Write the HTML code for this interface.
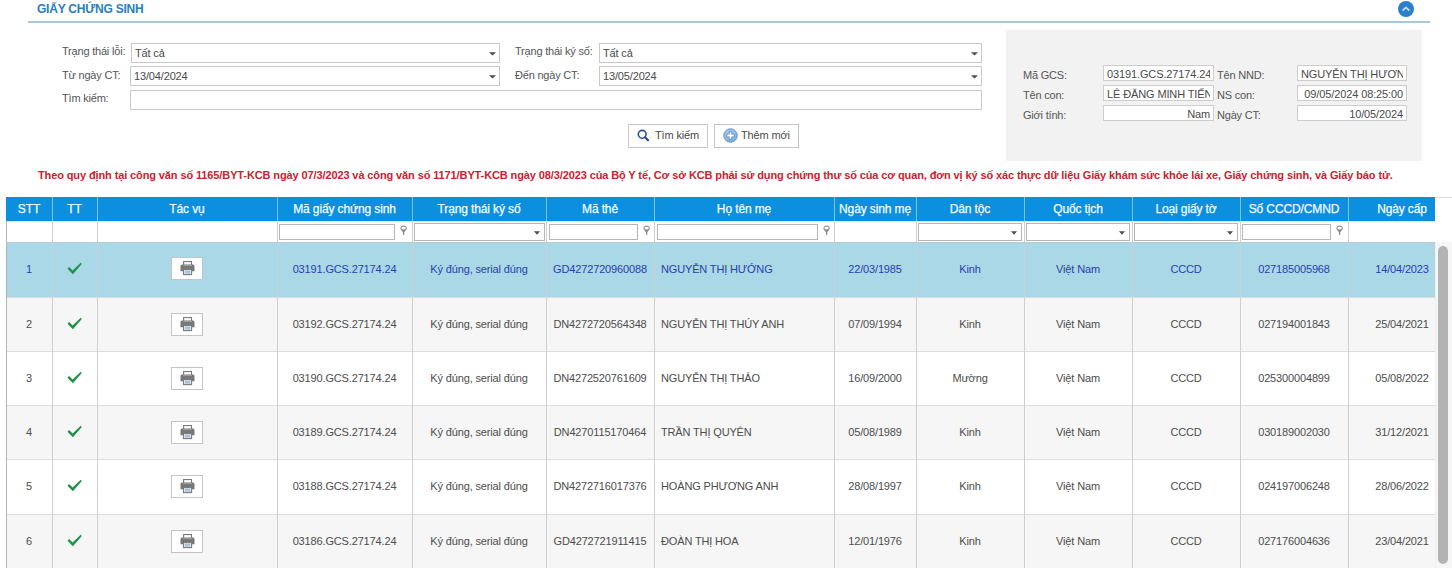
<!DOCTYPE html><html><head><meta charset="utf-8"><style>
*{margin:0;padding:0;box-sizing:border-box}
html,body{width:1452px;height:568px;overflow:hidden;background:#fff;font-family:"Liberation Sans", sans-serif;}
body{position:relative}
.title{position:absolute;left:37px;top:2px;font-size:12px;font-weight:bold;color:#2a80b9;line-height:14px;white-space:nowrap;letter-spacing:-0.22px}
.hline{position:absolute;left:28px;top:21px;width:1402px;height:2px;background:#a9c8d8}
.collapse{position:absolute;left:1398px;top:1px;width:16px;height:16px}
.collapse svg{display:block}
.lbl{position:absolute;font-size:11px;color:#555;line-height:13px;white-space:nowrap;letter-spacing:-0.2px}
.sel,.inp{position:absolute;border:1px solid #c9c9c9;background:#fff}
.itx{position:absolute;left:3px;top:3px;font-size:11px;color:#4a4a4a;line-height:13px;white-space:nowrap;letter-spacing:-0.15px}
.sel .arr{position:absolute;right:3px;top:8px}
.btn{position:absolute;border:1px solid #c4c4c4;background:#fff;font-size:11px;color:#4a4a4a;line-height:13px;white-space:nowrap;letter-spacing:-0.15px}
.panel{position:absolute;left:1006px;top:30px;width:416px;height:131px;background:#f2f2f2}
.pin{position:absolute;border:1px solid #cdcdcd;background:#fff;overflow:hidden}
.ptx{position:absolute;top:2px;font-size:11px;color:#4a4a4a;line-height:13px;white-space:nowrap;letter-spacing:-0.12px}
.pclip{position:absolute;left:3px;right:3px;top:0;bottom:0;overflow:hidden}
.ptx.l{left:0}
.ptx.r{right:0}
.notice{position:absolute;left:38px;top:169px;font-size:11px;font-weight:bold;color:#ca2230;line-height:13px;white-space:nowrap;letter-spacing:-0.113px}
.tbl{position:absolute;left:6px;top:197px;width:1429px;height:371px;overflow:hidden}
.thead{position:absolute;left:0;top:0;width:1450px;height:24px;background:#0c8fde}
.th{position:absolute;top:0;height:24px;line-height:24px;text-align:center;color:#f2fbff;font-size:12px;white-space:nowrap;letter-spacing:-0.12px;-webkit-text-stroke:0.25px #f2fbff}
.thsep{position:absolute;top:0;width:1px;height:24px;background:#7cc3ee}
.frow{position:absolute;left:0;top:24px;width:1450px;height:21px;background:#fff}
.fsep{position:absolute;top:24px;width:1px;height:21px;background:#cfcfcf}
.finp{position:absolute;top:27px;height:16px;border:1px solid #b5b5b5;background:#fff}
.fpin{position:absolute;top:28px;width:8px;height:11px}
.fpin svg{display:block}
.fdd{position:absolute;top:26px;height:18px;border:1px solid #b5b5b5;background:#fff}
.fdd .arr{position:absolute;right:4px;top:7px}
.tr{position:absolute;left:0;width:1450px;border-bottom:1px solid #dcdcdc;box-sizing:content-box;font-size:11px;color:#4d4d4d;letter-spacing:-0.15px}
.tr.sel1{color:#2b3db0}
.td{position:absolute;height:13px;line-height:13px;white-space:nowrap;overflow:hidden}
.td svg{vertical-align:middle}
.tsep{position:absolute;top:0;width:1px;background:#cfcfcf}
.tbl .lborder{position:absolute;left:0;top:24px;width:1px;height:400px;background:#c8c8c8}
.pbtn{position:absolute;width:32px;height:23px;border:1px solid #c4c4c4;background:#fff}
.ico{position:absolute;line-height:0}
.ico svg{display:block}
.sbtrack{position:absolute;left:1435px;top:242px;width:17px;height:326px;background:#f6f6f6;border-left:1px solid #efefef}
.sbtop{position:absolute;left:1435px;top:197px;width:17px;height:1px;background:#dedede}
.sbthumb{position:absolute;left:1438px;top:246px;width:10px;height:318px;background:#b3b3b3;border-radius:5px}
</style></head><body>
<div class="title">GIẤY CHỨNG SINH</div>
<div class="hline"></div>
<div class="collapse"><svg width="16" height="16" viewBox="0 0 16 16"><circle cx="8" cy="8" r="8" fill="#2b7fcb"/><path d="M4.6 9.6 L8 6.4 L11.4 9.6" stroke="#bfe3ff" stroke-width="1.8" fill="none"/></svg></div>
<div class="lbl" style="left:62px;top:45px">Trạng thái lỗi:</div>
<div class="sel" style="left:131px;top:43px;width:369px;height:20px"><span class="itx">Tất cả</span><svg class="arr" width="7" height="4" viewBox="0 0 7 4"><path d="M0 0.2H7L3.5 3.6Z" fill="#4d4d4d"/></svg></div>
<div class="lbl" style="left:62px;top:69px">Từ ngày CT:</div>
<div class="sel" style="left:130px;top:66px;width:370px;height:20px"><span class="itx">13/04/2024</span><svg class="arr" width="7" height="4" viewBox="0 0 7 4"><path d="M0 0.2H7L3.5 3.6Z" fill="#4d4d4d"/></svg></div>
<div class="lbl" style="left:62px;top:92px">Tìm kiếm:</div>
<div class="inp" style="left:130px;top:90px;width:852px;height:20px"></div>
<div class="lbl" style="left:515px;top:45px">Trạng thái ký số:</div>
<div class="sel" style="left:599px;top:43px;width:383px;height:20px"><span class="itx">Tất cả</span><svg class="arr" width="7" height="4" viewBox="0 0 7 4"><path d="M0 0.2H7L3.5 3.6Z" fill="#4d4d4d"/></svg></div>
<div class="lbl" style="left:515px;top:69px">Đến ngày CT:</div>
<div class="sel" style="left:599px;top:66px;width:383px;height:20px"><span class="itx">13/05/2024</span><svg class="arr" width="7" height="4" viewBox="0 0 7 4"><path d="M0 0.2H7L3.5 3.6Z" fill="#4d4d4d"/></svg></div>
<div class="btn" style="left:628px;top:124px;width:80px;height:24px"><svg width="14" height="14" viewBox="0 0 14 14" style="position:absolute;left:8px;top:4px"><circle cx="5.2" cy="5.3" r="3.9" stroke="#2d4f88" stroke-width="1.6" fill="none"/><path d="M8 8.2 L11 11.3" stroke="#2d4f88" stroke-width="2.2" stroke-linecap="round"/></svg><span style="position:absolute;left:26px;top:4px">Tìm kiếm</span></div>
<div class="btn" style="left:714px;top:124px;width:85px;height:24px"><svg width="15" height="15" viewBox="0 0 15 15" style="position:absolute;left:8px;top:3px"><defs><radialGradient id="pg" cx="45%" cy="40%" r="65%"><stop offset="0" stop-color="#bddcf4"/><stop offset="0.7" stop-color="#88b7e1"/><stop offset="1" stop-color="#6697cb"/></radialGradient></defs><circle cx="7.5" cy="7.5" r="6.8" fill="url(#pg)" stroke="#6a98c8" stroke-width="0.9"/><path d="M7.5 3.5V11.5M3.5 7.5H11.5" stroke="#5584ba" stroke-width="3.4"/><path d="M7.5 4.2V10.8M4.2 7.5H10.8" stroke="#fff" stroke-width="1.8"/></svg><span style="position:absolute;left:26px;top:4px">Thêm mới</span></div>
<div class="panel"></div>
<div class="lbl" style="left:1023px;top:69px">Mã GCS:</div>
<div class="pin" style="left:1103px;top:65px;width:111px;height:16px"><div class="pclip"><span class="ptx l">03191.GCS.27174.24</span></div></div>
<div class="lbl" style="left:1217px;top:69px">Tên NND:</div>
<div class="pin" style="left:1297px;top:65px;width:110px;height:16px"><div class="pclip"><span class="ptx l">NGUYỄN THỊ HƯƠNG</span></div></div>
<div class="lbl" style="left:1023px;top:89px">Tên con:</div>
<div class="pin" style="left:1103px;top:85px;width:111px;height:16px"><div class="pclip"><span class="ptx l">LÊ ĐĂNG MINH TIẾN</span></div></div>
<div class="lbl" style="left:1217px;top:89px">NS con:</div>
<div class="pin" style="left:1297px;top:85px;width:110px;height:16px"><div class="pclip"><span class="ptx r">09/05/2024 08:25:00</span></div></div>
<div class="lbl" style="left:1023px;top:109px">Giới tính:</div>
<div class="pin" style="left:1103px;top:105px;width:111px;height:16px"><div class="pclip"><span class="ptx r">Nam</span></div></div>
<div class="lbl" style="left:1217px;top:109px">Ngày CT:</div>
<div class="pin" style="left:1297px;top:105px;width:110px;height:16px"><div class="pclip"><span class="ptx r">10/05/2024</span></div></div>
<div class="notice">Theo quy định tại công văn số 1165/BYT-KCB ngày 07/3/2023 và công văn số 1171/BYT-KCB ngày 08/3/2023 của Bộ Y tế, Cơ sở KCB phải sử dụng chứng thư số của cơ quan, đơn vị ký số xác thực dữ liệu Giấy khám sức khỏe lái xe, Giấy chứng sinh, và Giấy báo tử.</div>
<div class="tbl">
<div class="thead"></div>
<div class="th" style="left:0px;width:46px">STT</div>
<div class="thsep" style="left:46px"></div>
<div class="th" style="left:46px;width:45px">TT</div>
<div class="thsep" style="left:91px"></div>
<div class="th" style="left:91px;width:180px">Tác vụ</div>
<div class="thsep" style="left:271px"></div>
<div class="th" style="left:271px;width:135px">Mã giấy chứng sinh</div>
<div class="thsep" style="left:406px"></div>
<div class="th" style="left:406px;width:134px">Trạng thái ký số</div>
<div class="thsep" style="left:540px"></div>
<div class="th" style="left:540px;width:108px">Mã thẻ</div>
<div class="thsep" style="left:648px"></div>
<div class="th" style="left:648px;width:180px">Họ tên mẹ</div>
<div class="thsep" style="left:828px"></div>
<div class="th" style="left:828px;width:82px">Ngày sinh mẹ</div>
<div class="thsep" style="left:910px"></div>
<div class="th" style="left:910px;width:108px">Dân tộc</div>
<div class="thsep" style="left:1018px"></div>
<div class="th" style="left:1018px;width:108px">Quốc tịch</div>
<div class="thsep" style="left:1126px"></div>
<div class="th" style="left:1126px;width:108px">Loại giấy tờ</div>
<div class="thsep" style="left:1234px"></div>
<div class="th" style="left:1234px;width:108px">Số CCCD/CMND</div>
<div class="thsep" style="left:1342px"></div>
<div class="th" style="left:1342px;width:108px">Ngày cấp</div>
<div class="frow"></div>

<div class="fsep" style="left:46px"></div>
<div class="fsep" style="left:91px"></div>
<div class="fsep" style="left:271px"></div>
<div class="fsep" style="left:406px"></div>
<div class="finp" style="left:273px;width:116px"></div>
<div class="fpin" style="left:393px"><svg width="8" height="11" viewBox="-0.6 0 8 11"><path d="M0.8 3.2 C0.8 1.4 2.3 0.6 4 0.6 C5.7 0.6 7.2 1.4 7.2 3.2 C7.2 5.2 5.2 6 4.7 7.4 L4.6 10.1 L3.4 10.1 L3.3 7.4 C2.8 6 0.8 5.2 0.8 3.2 Z" fill="#8f8f8f"/><ellipse cx="4" cy="3.1" rx="2.2" ry="1.35" fill="#fcfcfc"/></svg></div>
<div class="fsep" style="left:540px"></div>
<div class="fdd" style="left:408px;width:131px"><svg class="arr" width="6" height="4" viewBox="0 0 6 4"><path d="M0 0.3H6L3 3.8Z" fill="#4d4d4d"/></svg></div>
<div class="fsep" style="left:648px"></div>
<div class="finp" style="left:543px;width:89px"></div>
<div class="fpin" style="left:636px"><svg width="8" height="11" viewBox="-0.6 0 8 11"><path d="M0.8 3.2 C0.8 1.4 2.3 0.6 4 0.6 C5.7 0.6 7.2 1.4 7.2 3.2 C7.2 5.2 5.2 6 4.7 7.4 L4.6 10.1 L3.4 10.1 L3.3 7.4 C2.8 6 0.8 5.2 0.8 3.2 Z" fill="#8f8f8f"/><ellipse cx="4" cy="3.1" rx="2.2" ry="1.35" fill="#fcfcfc"/></svg></div>
<div class="fsep" style="left:828px"></div>
<div class="finp" style="left:651px;width:161px"></div>
<div class="fpin" style="left:816px"><svg width="8" height="11" viewBox="-0.6 0 8 11"><path d="M0.8 3.2 C0.8 1.4 2.3 0.6 4 0.6 C5.7 0.6 7.2 1.4 7.2 3.2 C7.2 5.2 5.2 6 4.7 7.4 L4.6 10.1 L3.4 10.1 L3.3 7.4 C2.8 6 0.8 5.2 0.8 3.2 Z" fill="#8f8f8f"/><ellipse cx="4" cy="3.1" rx="2.2" ry="1.35" fill="#fcfcfc"/></svg></div>
<div class="fsep" style="left:910px"></div>
<div class="fsep" style="left:1018px"></div>
<div class="fdd" style="left:912px;width:104px"><svg class="arr" width="6" height="4" viewBox="0 0 6 4"><path d="M0 0.3H6L3 3.8Z" fill="#4d4d4d"/></svg></div>
<div class="fsep" style="left:1126px"></div>
<div class="fdd" style="left:1020px;width:104px"><svg class="arr" width="6" height="4" viewBox="0 0 6 4"><path d="M0 0.3H6L3 3.8Z" fill="#4d4d4d"/></svg></div>
<div class="fsep" style="left:1234px"></div>
<div class="fdd" style="left:1128px;width:104px"><svg class="arr" width="6" height="4" viewBox="0 0 6 4"><path d="M0 0.3H6L3 3.8Z" fill="#4d4d4d"/></svg></div>
<div class="fsep" style="left:1342px"></div>
<div class="finp" style="left:1236px;width:89px"></div>
<div class="fpin" style="left:1329px"><svg width="8" height="11" viewBox="-0.6 0 8 11"><path d="M0.8 3.2 C0.8 1.4 2.3 0.6 4 0.6 C5.7 0.6 7.2 1.4 7.2 3.2 C7.2 5.2 5.2 6 4.7 7.4 L4.6 10.1 L3.4 10.1 L3.3 7.4 C2.8 6 0.8 5.2 0.8 3.2 Z" fill="#8f8f8f"/><ellipse cx="4" cy="3.1" rx="2.2" ry="1.35" fill="#fcfcfc"/></svg></div>
<div class="tr sel1" style="top:45px;height:55px;background:#aad8e6">
<div class="td" style="left:0px;width:46px;top:21px;text-align:center">1</div>
<div class="tsep" style="left:46px;height:56px"></div>
<div class="ico" style="left:61px;top:20px"><svg width="15" height="13" viewBox="0 0 15 13"><path d="M0.5 6.7 L2.1 5.1 L5.6 8.6 L13.7 0.8 L14.8 1.9 L5.9 12.2 Z" fill="#1d9447"/></svg></div>
<div class="tsep" style="left:91px;height:56px"></div>
<div class="pbtn" style="left:165px;top:15px"><div class="ico" style="left:8px;top:3px"><svg width="15" height="15" viewBox="0 0 15 15"><rect x="3.6" y="0.55" width="7.9" height="4.6" fill="#fff" stroke="#7a7a7a" stroke-width="1.1"/><path d="M0.5 4.9 Q0.5 3.4 2 3.4 H13 Q14.5 3.4 14.5 4.9 V10.2 H0.5 Z" fill="#777"/><path d="M3 4.4 H12" stroke="#a9a9a9" stroke-width="0.8"/><rect x="3.5" y="8.4" width="8.1" height="5.2" fill="#dfe7f0" stroke="#7a7a7a" stroke-width="1.1"/><path d="M5 10.2H10.1M5 11.9H10.1" stroke="#8ea6c6" stroke-width="0.9"/></svg></div></div>
<div class="tsep" style="left:271px;height:56px"></div>
<div class="td" style="left:271px;width:135px;top:21px;text-align:center">03191.GCS.27174.24</div>
<div class="tsep" style="left:406px;height:56px"></div>
<div class="td" style="left:406px;width:134px;top:21px;text-align:center">Ký đúng, serial đúng</div>
<div class="tsep" style="left:540px;height:56px"></div>
<div class="td" style="left:540px;width:108px;top:21px;text-align:center">GD4272720960088</div>
<div class="tsep" style="left:648px;height:56px"></div>
<div class="td" style="left:648px;width:180px;top:21px;text-align:left;padding-left:7px">NGUYỄN THỊ HƯỚNG</div>
<div class="tsep" style="left:828px;height:56px"></div>
<div class="td" style="left:828px;width:82px;top:21px;text-align:center">22/03/1985</div>
<div class="tsep" style="left:910px;height:56px"></div>
<div class="td" style="left:910px;width:108px;top:21px;text-align:center">Kinh</div>
<div class="tsep" style="left:1018px;height:56px"></div>
<div class="td" style="left:1018px;width:108px;top:21px;text-align:center">Việt Nam</div>
<div class="tsep" style="left:1126px;height:56px"></div>
<div class="td" style="left:1126px;width:108px;top:21px;text-align:center">CCCD</div>
<div class="tsep" style="left:1234px;height:56px"></div>
<div class="td" style="left:1234px;width:108px;top:21px;text-align:center">027185005968</div>
<div class="tsep" style="left:1342px;height:56px"></div>
<div class="td" style="left:1342px;width:108px;top:21px;text-align:center">14/04/2023</div>
</div>
<div class="tr" style="top:101px;height:53px;background:#f6f6f6">
<div class="td" style="left:0px;width:46px;top:20px;text-align:center">2</div>
<div class="tsep" style="left:46px;height:54px"></div>
<div class="ico" style="left:61px;top:19px"><svg width="15" height="13" viewBox="0 0 15 13"><path d="M0.5 6.7 L2.1 5.1 L5.6 8.6 L13.7 0.8 L14.8 1.9 L5.9 12.2 Z" fill="#1d9447"/></svg></div>
<div class="tsep" style="left:91px;height:54px"></div>
<div class="pbtn" style="left:165px;top:15px"><div class="ico" style="left:8px;top:3px"><svg width="15" height="15" viewBox="0 0 15 15"><rect x="3.6" y="0.55" width="7.9" height="4.6" fill="#fff" stroke="#7a7a7a" stroke-width="1.1"/><path d="M0.5 4.9 Q0.5 3.4 2 3.4 H13 Q14.5 3.4 14.5 4.9 V10.2 H0.5 Z" fill="#777"/><path d="M3 4.4 H12" stroke="#a9a9a9" stroke-width="0.8"/><rect x="3.5" y="8.4" width="8.1" height="5.2" fill="#dfe7f0" stroke="#7a7a7a" stroke-width="1.1"/><path d="M5 10.2H10.1M5 11.9H10.1" stroke="#8ea6c6" stroke-width="0.9"/></svg></div></div>
<div class="tsep" style="left:271px;height:54px"></div>
<div class="td" style="left:271px;width:135px;top:20px;text-align:center">03192.GCS.27174.24</div>
<div class="tsep" style="left:406px;height:54px"></div>
<div class="td" style="left:406px;width:134px;top:20px;text-align:center">Ký đúng, serial đúng</div>
<div class="tsep" style="left:540px;height:54px"></div>
<div class="td" style="left:540px;width:108px;top:20px;text-align:center">DN4272720564348</div>
<div class="tsep" style="left:648px;height:54px"></div>
<div class="td" style="left:648px;width:180px;top:20px;text-align:left;padding-left:7px">NGUYỄN THỊ THÚY ANH</div>
<div class="tsep" style="left:828px;height:54px"></div>
<div class="td" style="left:828px;width:82px;top:20px;text-align:center">07/09/1994</div>
<div class="tsep" style="left:910px;height:54px"></div>
<div class="td" style="left:910px;width:108px;top:20px;text-align:center">Kinh</div>
<div class="tsep" style="left:1018px;height:54px"></div>
<div class="td" style="left:1018px;width:108px;top:20px;text-align:center">Việt Nam</div>
<div class="tsep" style="left:1126px;height:54px"></div>
<div class="td" style="left:1126px;width:108px;top:20px;text-align:center">CCCD</div>
<div class="tsep" style="left:1234px;height:54px"></div>
<div class="td" style="left:1234px;width:108px;top:20px;text-align:center">027194001843</div>
<div class="tsep" style="left:1342px;height:54px"></div>
<div class="td" style="left:1342px;width:108px;top:20px;text-align:center">25/04/2021</div>
</div>
<div class="tr" style="top:155px;height:53px;background:#ffffff">
<div class="td" style="left:0px;width:46px;top:20px;text-align:center">3</div>
<div class="tsep" style="left:46px;height:54px"></div>
<div class="ico" style="left:61px;top:19px"><svg width="15" height="13" viewBox="0 0 15 13"><path d="M0.5 6.7 L2.1 5.1 L5.6 8.6 L13.7 0.8 L14.8 1.9 L5.9 12.2 Z" fill="#1d9447"/></svg></div>
<div class="tsep" style="left:91px;height:54px"></div>
<div class="pbtn" style="left:165px;top:15px"><div class="ico" style="left:8px;top:3px"><svg width="15" height="15" viewBox="0 0 15 15"><rect x="3.6" y="0.55" width="7.9" height="4.6" fill="#fff" stroke="#7a7a7a" stroke-width="1.1"/><path d="M0.5 4.9 Q0.5 3.4 2 3.4 H13 Q14.5 3.4 14.5 4.9 V10.2 H0.5 Z" fill="#777"/><path d="M3 4.4 H12" stroke="#a9a9a9" stroke-width="0.8"/><rect x="3.5" y="8.4" width="8.1" height="5.2" fill="#dfe7f0" stroke="#7a7a7a" stroke-width="1.1"/><path d="M5 10.2H10.1M5 11.9H10.1" stroke="#8ea6c6" stroke-width="0.9"/></svg></div></div>
<div class="tsep" style="left:271px;height:54px"></div>
<div class="td" style="left:271px;width:135px;top:20px;text-align:center">03190.GCS.27174.24</div>
<div class="tsep" style="left:406px;height:54px"></div>
<div class="td" style="left:406px;width:134px;top:20px;text-align:center">Ký đúng, serial đúng</div>
<div class="tsep" style="left:540px;height:54px"></div>
<div class="td" style="left:540px;width:108px;top:20px;text-align:center">DN4272520761609</div>
<div class="tsep" style="left:648px;height:54px"></div>
<div class="td" style="left:648px;width:180px;top:20px;text-align:left;padding-left:7px">NGUYỄN THỊ THẢO</div>
<div class="tsep" style="left:828px;height:54px"></div>
<div class="td" style="left:828px;width:82px;top:20px;text-align:center">16/09/2000</div>
<div class="tsep" style="left:910px;height:54px"></div>
<div class="td" style="left:910px;width:108px;top:20px;text-align:center">Mường</div>
<div class="tsep" style="left:1018px;height:54px"></div>
<div class="td" style="left:1018px;width:108px;top:20px;text-align:center">Việt Nam</div>
<div class="tsep" style="left:1126px;height:54px"></div>
<div class="td" style="left:1126px;width:108px;top:20px;text-align:center">CCCD</div>
<div class="tsep" style="left:1234px;height:54px"></div>
<div class="td" style="left:1234px;width:108px;top:20px;text-align:center">025300004899</div>
<div class="tsep" style="left:1342px;height:54px"></div>
<div class="td" style="left:1342px;width:108px;top:20px;text-align:center">05/08/2022</div>
</div>
<div class="tr" style="top:209px;height:53px;background:#f6f6f6">
<div class="td" style="left:0px;width:46px;top:20px;text-align:center">4</div>
<div class="tsep" style="left:46px;height:54px"></div>
<div class="ico" style="left:61px;top:19px"><svg width="15" height="13" viewBox="0 0 15 13"><path d="M0.5 6.7 L2.1 5.1 L5.6 8.6 L13.7 0.8 L14.8 1.9 L5.9 12.2 Z" fill="#1d9447"/></svg></div>
<div class="tsep" style="left:91px;height:54px"></div>
<div class="pbtn" style="left:165px;top:15px"><div class="ico" style="left:8px;top:3px"><svg width="15" height="15" viewBox="0 0 15 15"><rect x="3.6" y="0.55" width="7.9" height="4.6" fill="#fff" stroke="#7a7a7a" stroke-width="1.1"/><path d="M0.5 4.9 Q0.5 3.4 2 3.4 H13 Q14.5 3.4 14.5 4.9 V10.2 H0.5 Z" fill="#777"/><path d="M3 4.4 H12" stroke="#a9a9a9" stroke-width="0.8"/><rect x="3.5" y="8.4" width="8.1" height="5.2" fill="#dfe7f0" stroke="#7a7a7a" stroke-width="1.1"/><path d="M5 10.2H10.1M5 11.9H10.1" stroke="#8ea6c6" stroke-width="0.9"/></svg></div></div>
<div class="tsep" style="left:271px;height:54px"></div>
<div class="td" style="left:271px;width:135px;top:20px;text-align:center">03189.GCS.27174.24</div>
<div class="tsep" style="left:406px;height:54px"></div>
<div class="td" style="left:406px;width:134px;top:20px;text-align:center">Ký đúng, serial đúng</div>
<div class="tsep" style="left:540px;height:54px"></div>
<div class="td" style="left:540px;width:108px;top:20px;text-align:center">DN4270115170464</div>
<div class="tsep" style="left:648px;height:54px"></div>
<div class="td" style="left:648px;width:180px;top:20px;text-align:left;padding-left:7px">TRẦN THỊ QUYÊN</div>
<div class="tsep" style="left:828px;height:54px"></div>
<div class="td" style="left:828px;width:82px;top:20px;text-align:center">05/08/1989</div>
<div class="tsep" style="left:910px;height:54px"></div>
<div class="td" style="left:910px;width:108px;top:20px;text-align:center">Kinh</div>
<div class="tsep" style="left:1018px;height:54px"></div>
<div class="td" style="left:1018px;width:108px;top:20px;text-align:center">Việt Nam</div>
<div class="tsep" style="left:1126px;height:54px"></div>
<div class="td" style="left:1126px;width:108px;top:20px;text-align:center">CCCD</div>
<div class="tsep" style="left:1234px;height:54px"></div>
<div class="td" style="left:1234px;width:108px;top:20px;text-align:center">030189002030</div>
<div class="tsep" style="left:1342px;height:54px"></div>
<div class="td" style="left:1342px;width:108px;top:20px;text-align:center">31/12/2021</div>
</div>
<div class="tr" style="top:263px;height:54px;background:#ffffff">
<div class="td" style="left:0px;width:46px;top:20px;text-align:center">5</div>
<div class="tsep" style="left:46px;height:55px"></div>
<div class="ico" style="left:61px;top:19px"><svg width="15" height="13" viewBox="0 0 15 13"><path d="M0.5 6.7 L2.1 5.1 L5.6 8.6 L13.7 0.8 L14.8 1.9 L5.9 12.2 Z" fill="#1d9447"/></svg></div>
<div class="tsep" style="left:91px;height:55px"></div>
<div class="pbtn" style="left:165px;top:15px"><div class="ico" style="left:8px;top:3px"><svg width="15" height="15" viewBox="0 0 15 15"><rect x="3.6" y="0.55" width="7.9" height="4.6" fill="#fff" stroke="#7a7a7a" stroke-width="1.1"/><path d="M0.5 4.9 Q0.5 3.4 2 3.4 H13 Q14.5 3.4 14.5 4.9 V10.2 H0.5 Z" fill="#777"/><path d="M3 4.4 H12" stroke="#a9a9a9" stroke-width="0.8"/><rect x="3.5" y="8.4" width="8.1" height="5.2" fill="#dfe7f0" stroke="#7a7a7a" stroke-width="1.1"/><path d="M5 10.2H10.1M5 11.9H10.1" stroke="#8ea6c6" stroke-width="0.9"/></svg></div></div>
<div class="tsep" style="left:271px;height:55px"></div>
<div class="td" style="left:271px;width:135px;top:20px;text-align:center">03188.GCS.27174.24</div>
<div class="tsep" style="left:406px;height:55px"></div>
<div class="td" style="left:406px;width:134px;top:20px;text-align:center">Ký đúng, serial đúng</div>
<div class="tsep" style="left:540px;height:55px"></div>
<div class="td" style="left:540px;width:108px;top:20px;text-align:center">DN4272716017376</div>
<div class="tsep" style="left:648px;height:55px"></div>
<div class="td" style="left:648px;width:180px;top:20px;text-align:left;padding-left:7px">HOÀNG PHƯƠNG ANH</div>
<div class="tsep" style="left:828px;height:55px"></div>
<div class="td" style="left:828px;width:82px;top:20px;text-align:center">28/08/1997</div>
<div class="tsep" style="left:910px;height:55px"></div>
<div class="td" style="left:910px;width:108px;top:20px;text-align:center">Kinh</div>
<div class="tsep" style="left:1018px;height:55px"></div>
<div class="td" style="left:1018px;width:108px;top:20px;text-align:center">Việt Nam</div>
<div class="tsep" style="left:1126px;height:55px"></div>
<div class="td" style="left:1126px;width:108px;top:20px;text-align:center">CCCD</div>
<div class="tsep" style="left:1234px;height:55px"></div>
<div class="td" style="left:1234px;width:108px;top:20px;text-align:center">024197006248</div>
<div class="tsep" style="left:1342px;height:55px"></div>
<div class="td" style="left:1342px;width:108px;top:20px;text-align:center">28/06/2022</div>
</div>
<div class="tr" style="top:318px;height:64px;background:#f6f6f6">
<div class="td" style="left:0px;width:46px;top:20px;text-align:center">6</div>
<div class="tsep" style="left:46px;height:65px"></div>
<div class="ico" style="left:61px;top:19px"><svg width="15" height="13" viewBox="0 0 15 13"><path d="M0.5 6.7 L2.1 5.1 L5.6 8.6 L13.7 0.8 L14.8 1.9 L5.9 12.2 Z" fill="#1d9447"/></svg></div>
<div class="tsep" style="left:91px;height:65px"></div>
<div class="pbtn" style="left:165px;top:15px"><div class="ico" style="left:8px;top:3px"><svg width="15" height="15" viewBox="0 0 15 15"><rect x="3.6" y="0.55" width="7.9" height="4.6" fill="#fff" stroke="#7a7a7a" stroke-width="1.1"/><path d="M0.5 4.9 Q0.5 3.4 2 3.4 H13 Q14.5 3.4 14.5 4.9 V10.2 H0.5 Z" fill="#777"/><path d="M3 4.4 H12" stroke="#a9a9a9" stroke-width="0.8"/><rect x="3.5" y="8.4" width="8.1" height="5.2" fill="#dfe7f0" stroke="#7a7a7a" stroke-width="1.1"/><path d="M5 10.2H10.1M5 11.9H10.1" stroke="#8ea6c6" stroke-width="0.9"/></svg></div></div>
<div class="tsep" style="left:271px;height:65px"></div>
<div class="td" style="left:271px;width:135px;top:20px;text-align:center">03186.GCS.27174.24</div>
<div class="tsep" style="left:406px;height:65px"></div>
<div class="td" style="left:406px;width:134px;top:20px;text-align:center">Ký đúng, serial đúng</div>
<div class="tsep" style="left:540px;height:65px"></div>
<div class="td" style="left:540px;width:108px;top:20px;text-align:center">GD4272721911415</div>
<div class="tsep" style="left:648px;height:65px"></div>
<div class="td" style="left:648px;width:180px;top:20px;text-align:left;padding-left:7px">ĐOÀN THỊ HOA</div>
<div class="tsep" style="left:828px;height:65px"></div>
<div class="td" style="left:828px;width:82px;top:20px;text-align:center">12/01/1976</div>
<div class="tsep" style="left:910px;height:65px"></div>
<div class="td" style="left:910px;width:108px;top:20px;text-align:center">Kinh</div>
<div class="tsep" style="left:1018px;height:65px"></div>
<div class="td" style="left:1018px;width:108px;top:20px;text-align:center">Việt Nam</div>
<div class="tsep" style="left:1126px;height:65px"></div>
<div class="td" style="left:1126px;width:108px;top:20px;text-align:center">CCCD</div>
<div class="tsep" style="left:1234px;height:65px"></div>
<div class="td" style="left:1234px;width:108px;top:20px;text-align:center">027176004636</div>
<div class="tsep" style="left:1342px;height:65px"></div>
<div class="td" style="left:1342px;width:108px;top:20px;text-align:center">23/04/2021</div>
</div>
</div>
<div class="sbtop"></div><div class="sbtrack"></div><div class="sbthumb"></div>
<div style="position:absolute;left:6px;top:221px;width:1px;height:347px;background:#b4b4b4"></div><div style="position:absolute;left:7px;top:221px;width:1428px;height:1px;background:#c9e8f8"></div><div style="position:absolute;left:7px;top:242px;width:1428px;height:1px;background:#b3ccd6"></div></body></html>
